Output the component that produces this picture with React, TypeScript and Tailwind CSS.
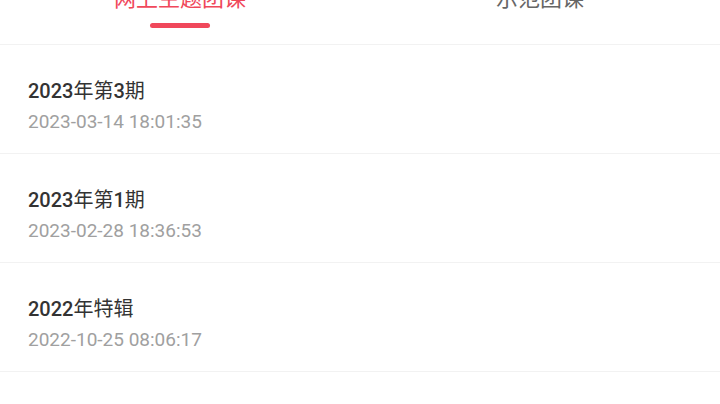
const tabs = [
    { label: '网上主题团课', active: true },
    { label: '示范团课', active: false },
]

const lessons = [
    { title: '2023年第3期', time: '2023-03-14 18:01:35' },
    { title: '2023年第1期', time: '2023-02-28 18:36:53' },
    { title: '2022年特辑', time: '2022-10-25 08:06:17' },
]

// digits render in medium weight, the Chinese characters stay regular
function Title({ text }: { text: string }) {
    const parts = text.split(/(\d+)/).filter(Boolean)
    return (
        <p className="text-[20px] leading-[26px] text-[#333333]">
            {parts.map((part, i) => (
                <span key={i} className={/\d/.test(part) ? 'font-medium' : 'font-normal'}>{part}</span>
            ))}
        </p>
    )
}

export default function App() {
    return (
        <div className="h-[404px] overflow-hidden bg-white" style={{ fontFamily: 'Roboto, "Noto Sans CJK SC", sans-serif' }}>
            <div className="-mt-[12px] flex border-b border-[#f2f2f2] pb-[16px]">
                {tabs.map((tab) => (
                    <div key={tab.label} className="flex flex-1 flex-col items-center">
                        <span className={`text-[22px] leading-[22px] ${tab.active ? 'text-[#f0485b]' : 'text-[#666666]'}`}>
                            {tab.label}
                        </span>
                        <div className={`mt-[13px] h-[5px] w-[60px] rounded-full ${tab.active ? 'bg-[#f0485b]' : 'bg-transparent'}`} />
                    </div>
                ))}
            </div>
            <ul>
                {lessons.map((item) => (
                    <li key={item.time} className="border-b border-[#f2f2f2] px-[28px] pt-[33px] pb-[18px]">
                        <Title text={item.title} />
                        <p className="mt-[5px] text-[19px] leading-[26px] text-[#a0a0a0]">{item.time}</p>
                    </li>
                ))}
            </ul>
        </div>
    )
}
